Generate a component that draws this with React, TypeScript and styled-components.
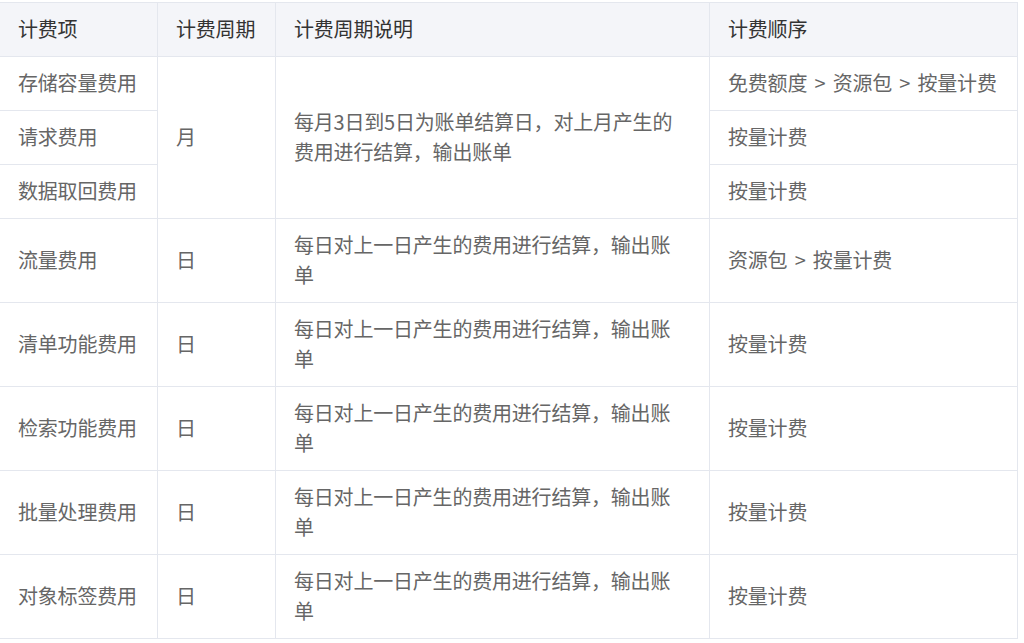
import React from "react";
import styled, { createGlobalStyle } from "styled-components";

const GlobalStyle = createGlobalStyle`
  html, body {
    margin: 0;
    padding: 0;
    background: #fff;
  }
  body {
    font-family: "Noto Sans CJK SC", "Noto Sans", sans-serif;
    -webkit-font-smoothing: antialiased;
  }
`;

const Table = styled.table`
  width: 1018px;
  margin: 2px 0 0 -1px;
  table-layout: fixed;
  border-collapse: collapse;
  font-size: 20px;
  letter-spacing: -0.2px;
  word-spacing: 3px;
  line-height: 30px;
  color: #666;
`;

const HeadCell = styled.th`
  height: 53px;
  box-sizing: border-box;
  padding: 11px 20px 12px 18px;
  text-align: left;
  font-weight: 400;
  color: #333;
  background: #f4f5f9;
  border: 1px solid #e4e7ee;
  vertical-align: middle;
  white-space: nowrap;
`;

const Cell = styled.td<{ $tall?: boolean; $wrap?: boolean }>`
  height: ${(p) => (p.$tall ? "83px" : "53px")};
  box-sizing: border-box;
  padding: 11px 20px 12px 18px;
  border: 1px solid #e4e7ee;
  vertical-align: middle;
  white-space: ${(p) => (p.$wrap ? "normal" : "nowrap")};
  word-break: break-all;
`;

interface DailyItem {
  name: string;
  order: string;
}

const dailyDesc = "每日对上一日产生的费用进行结算，输出账单";

const dailyItems: DailyItem[] = [
  { name: "流量费用", order: "资源包 > 按量计费" },
  { name: "清单功能费用", order: "按量计费" },
  { name: "检索功能费用", order: "按量计费" },
  { name: "批量处理费用", order: "按量计费" },
  { name: "对象标签费用", order: "按量计费" },
];

export default function App() {
  return (
    <>
      <GlobalStyle />
      <Table>
        <colgroup>
          <col style={{ width: 158 }} />
          <col style={{ width: 118 }} />
          <col style={{ width: 434 }} />
          <col style={{ width: 308 }} />
        </colgroup>
        <thead>
          <tr>
            <HeadCell>计费项</HeadCell>
            <HeadCell>计费周期</HeadCell>
            <HeadCell>计费周期说明</HeadCell>
            <HeadCell>计费顺序</HeadCell>
          </tr>
        </thead>
        <tbody>
          <tr>
            <Cell>存储容量费用</Cell>
            <Cell rowSpan={3}>月</Cell>
            <Cell rowSpan={3} $wrap>
              每月3日到5日为账单结算日，对上月产生的费用进行结算，输出账单
            </Cell>
            <Cell>免费额度 &gt; 资源包 &gt; 按量计费</Cell>
          </tr>
          <tr>
            <Cell>请求费用</Cell>
            <Cell>按量计费</Cell>
          </tr>
          <tr>
            <Cell>数据取回费用</Cell>
            <Cell>按量计费</Cell>
          </tr>
          {dailyItems.map((item) => (
            <tr key={item.name}>
              <Cell $tall>{item.name}</Cell>
              <Cell $tall>日</Cell>
              <Cell $tall $wrap>
                {dailyDesc}
              </Cell>
              <Cell $tall>{item.order}</Cell>
            </tr>
          ))}
        </tbody>
      </Table>
    </>
  );
}
